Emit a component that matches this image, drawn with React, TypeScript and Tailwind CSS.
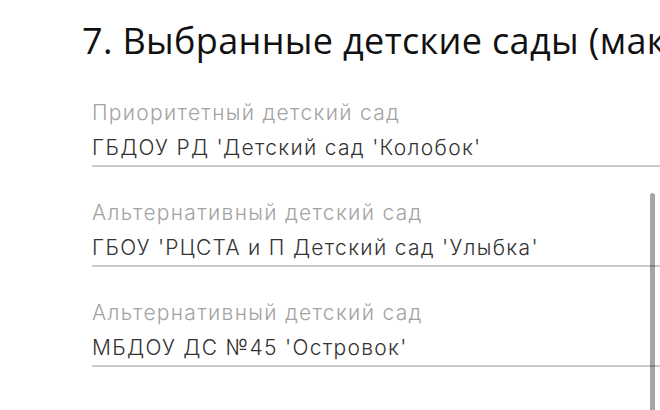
const fields = [
  { label: "Приоритетный детский сад", value: "ГБДОУ РД 'Детский сад 'Колобок'" },
  { label: "Альтернативный детский сад", value: "ГБОУ 'РЦСТА и П Детский сад 'Улыбка'" },
  { label: "Альтернативный детский сад", value: "МБДОУ ДС №45 'Островок'" },
];

export default function App() {
  return (
    <div className="relative h-[410px] w-[660px] overflow-hidden bg-white">
      <h2 className="ml-[82px] mt-[19px] whitespace-nowrap font-['Open_Sans',sans-serif] text-[36px] leading-[44px] tracking-[0.35px] text-[#111]">
        7. Выбранные детские сады (максимум 3)
      </h2>

      <div className="ml-[92px] mt-[37px] flex flex-col gap-[33px]">
        {fields.map((f, i) => (
          <div
            key={i}
            className="w-[600px] border-b-2 border-[#c9c9c9] pb-[4px] font-['Inter',sans-serif] text-[21px] font-light leading-[26px] tracking-[1.3px]"
          >
            <div className="whitespace-nowrap text-[#a3a3a3]">{f.label}</div>
            <div className="mt-[9px] whitespace-nowrap text-[#333]">{f.value}</div>
          </div>
        ))}
      </div>

      {/* scrollbar overlay */}
      <div className="absolute right-[5px] top-[193px] bottom-0 w-[5px] rounded-t-full bg-black/35" />
    </div>
  );
}
